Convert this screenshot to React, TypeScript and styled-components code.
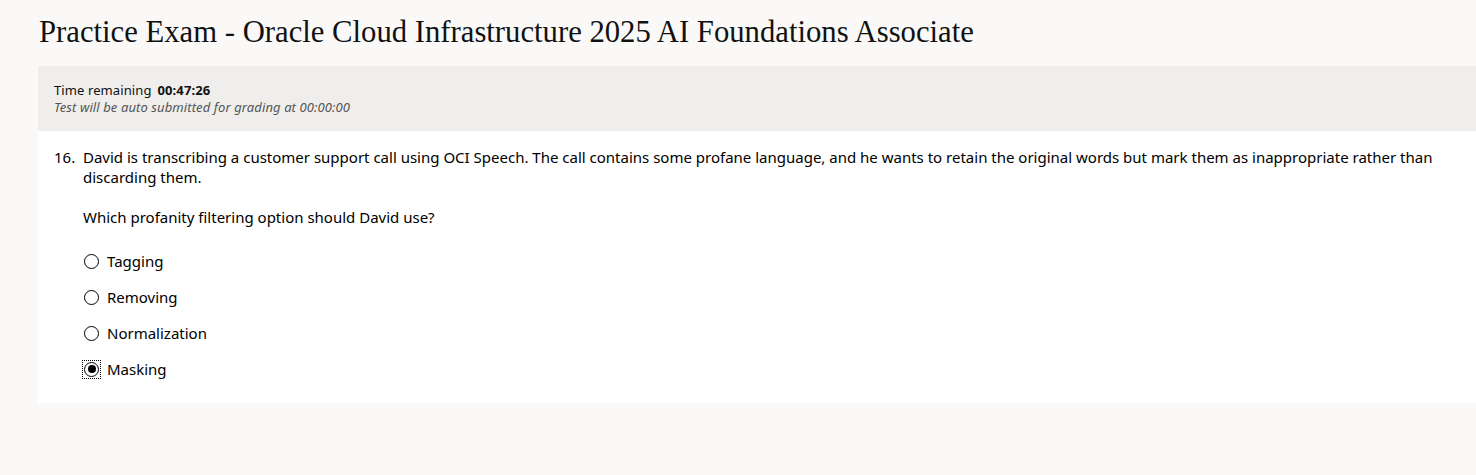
import React, { useState } from 'react';
import styled, { createGlobalStyle } from 'styled-components';

const GlobalStyle = createGlobalStyle`
  html, body {
    margin: 0;
    padding: 0;
    background: #faf9f8;
  }
`;

const Page = styled.div`
  padding: 0 0 0 38px;
  font-family: 'Noto Sans', 'Open Sans', sans-serif;
  color: #000;
`;

const Title = styled.h1`
  margin: 0;
  padding: 14px 0 0 1px;
  height: 52px;
  box-sizing: border-box;
  font-family: 'Liberation Serif', Georgia, serif;
  font-weight: 400;
  font-size: 30.7px;
  line-height: 36px;
  color: #111;
`;

const TimerBar = styled.div`
  margin-top: 14px;
  height: 65px;
  box-sizing: border-box;
  padding: 16px 16px 0;
  background: #efeeec;
  font-size: 13px;
  line-height: 17px;
  letter-spacing: 0.1px;
`;

const TimeLabel = styled.div`
  color: #111;
  b {
    margin-left: 6px;
    font-weight: 700;
  }
`;

const AutoSubmit = styled.div`
  font-style: italic;
  color: #555;
`;

const QuestionCard = styled.div`
  background: #fff;
  padding: 16px 40px 24px 16px;
  font-size: 15px;
  line-height: 20px;
`;

const QuestionRow = styled.div`
  display: grid;
  grid-template-columns: 29px 1fr;
`;

const Prompt = styled.p`
  margin: 0 0 20px;
`;

const Options = styled.div`
  display: flex;
  flex-direction: column;
  gap: 16px;
  margin-top: 24px;
`;

const OptionLabel = styled.label`
  display: flex;
  align-items: center;
  gap: 7px;
  height: 20px;
  cursor: pointer;
`;

const RadioWrap = styled.span<{ $focused: boolean }>`
  display: inline-flex;
  align-items: center;
  justify-content: center;
  width: 17px;
  height: 17px;
  outline: ${(p) => (p.$focused ? '1px dotted #000' : 'none')};
  outline-offset: 0;
`;

const Circle = styled.span<{ $checked: boolean }>`
  width: 15px;
  height: 15px;
  box-sizing: border-box;
  border: 1.5px solid #000;
  border-radius: 50%;
  display: flex;
  align-items: center;
  justify-content: center;
  &::after {
    content: '';
    width: 8px;
    height: 8px;
    border-radius: 50%;
    background: ${(p) => (p.$checked ? '#000' : 'transparent')};
  }
`;

const options = ['Tagging', 'Removing', 'Normalization', 'Masking'];

export default function App() {
  const [selected, setSelected] = useState('Masking');

  return (
    <Page>
      <GlobalStyle />
      <Title>Practice Exam - Oracle Cloud Infrastructure 2025 AI Foundations Associate</Title>
      <TimerBar>
        <TimeLabel>
          Time remaining<b>00:47:26</b>
        </TimeLabel>
        <AutoSubmit>Test will be auto submitted for grading at 00:00:00</AutoSubmit>
      </TimerBar>
      <QuestionCard>
        <QuestionRow>
          <span>16.</span>
          <div>
            <Prompt>
              David is transcribing a customer support call using OCI Speech. The call contains some profane
              language, and he wants to retain the original words but mark them as inappropriate rather than
              discarding them.
            </Prompt>
            <div>Which profanity filtering option should David use?</div>
            <Options>
              {options.map((o) => (
                <OptionLabel key={o} onClick={() => setSelected(o)}>
                  <RadioWrap $focused={selected === o}>
                    <Circle $checked={selected === o} />
                  </RadioWrap>
                  {o}
                </OptionLabel>
              ))}
            </Options>
          </div>
        </QuestionRow>
      </QuestionCard>
    </Page>
  );
}
